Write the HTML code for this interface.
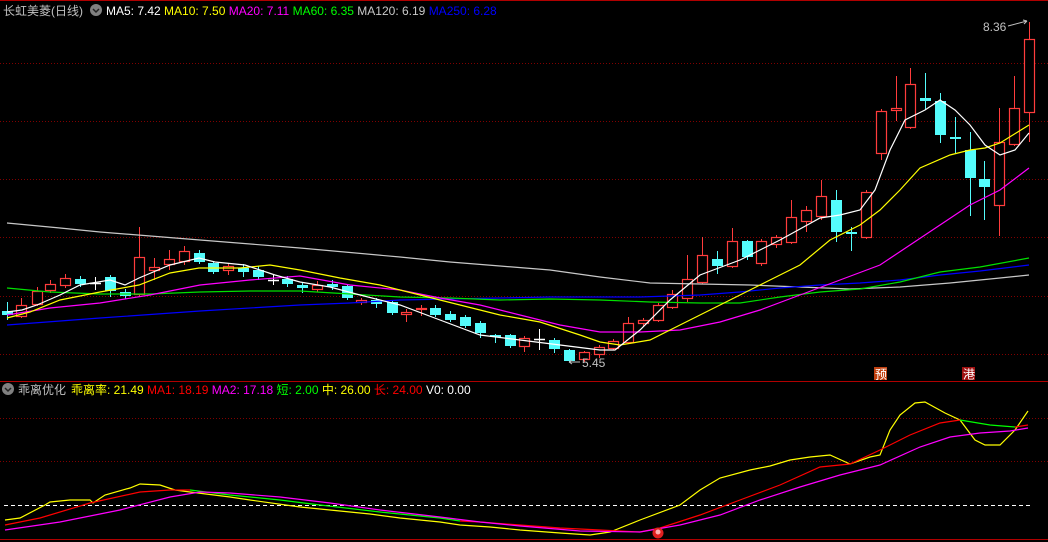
<!DOCTYPE html>
<html><head><meta charset="utf-8"><style>
html,body{margin:0;padding:0;background:#000;width:1048px;height:542px;overflow:hidden}
svg{display:block}
text{font-family:"Liberation Sans","Noto Sans CJK SC",sans-serif;font-size:12px}
</style></head><body>
<svg id="s" width="1048" height="542" viewBox="0 0 1048 542" xmlns="http://www.w3.org/2000/svg">
<rect width="1048" height="542" fill="#000"/>
<line x1="0" y1="0.5" x2="1048" y2="0.5" stroke="#b00000"/>
<g stroke="#800000" stroke-dasharray="1,2" stroke-width="1">
<line x1="0" y1="63.5" x2="1048" y2="63.5"/><line x1="0" y1="121.5" x2="1048" y2="121.5"/>
<line x1="0" y1="179.5" x2="1048" y2="179.5"/><line x1="0" y1="237.5" x2="1048" y2="237.5"/>
<line x1="0" y1="296.5" x2="1048" y2="296.5"/><line x1="0" y1="354.5" x2="1048" y2="354.5"/>
<line x1="0" y1="418.5" x2="1048" y2="418.5"/><line x1="0" y1="461.5" x2="1048" y2="461.5"/>
</g>
<line x1="0" y1="381.5" x2="1048" y2="381.5" stroke="#b00000"/>
<line x1="0" y1="539.5" x2="1048" y2="539.5" stroke="#b00000"/>
<line x1="4" y1="505.5" x2="1030" y2="505.5" stroke="#fff" stroke-dasharray="4,3"/>
<g id="c"></g>
<g fill="none" stroke-width="1.2">
<polyline stroke="#c8c8c8" points="7,223 60,228 100,232 200,240 300,248 400,257 450,262 500,266 550,270 600,277 650,283 700,284 750,285 800,287 850,289 900,287 950,283 1000,278 1029,275"/>
<polyline stroke="#0000ff" points="7,325 100,318 200,311 300,305 350,303 400,300 450,299 500,298 550,297 600,297 640,297 700,295 740,292 780,288 820,285 860,283 900,280 940,275 980,271 1029,265"/>
<polyline stroke="#00e000" points="7,288 50,292 100,294 150,294 200,292 250,291 300,291 350,294 400,297 450,298 500,300 550,299 600,300 650,302 700,303 740,303 780,297 820,292 860,289 900,282 940,272 980,267 1029,258"/>
<polyline stroke="#ff00ff" points="7,315 50,308 100,303 150,295 200,285 250,280 300,276 350,285 400,290 440,298 480,305 520,315 560,325 600,332 640,332 680,330 720,322 760,310 800,295 840,280 880,265 910,245 940,225 970,205 1000,190 1029,168"/>
<polyline stroke="#ffff00" points="7,318 30,312 60,300 100,292 139,285 170,273 199,268 240,268 270,265 300,270 340,278 380,285 420,295 460,305 500,315 540,322 580,335 600,342 620,345 650,340 680,325 720,305 760,285 800,265 830,240 860,225 880,210 900,190 920,168 950,155 970,150 985,148 1000,143 1029,125"/>
<polyline stroke="#ffffff" points="7,312 22,310 37,305 60,295 80,285 110,280 125,285 139,278 170,265 199,258 215,262 245,265 275,275 300,282 330,287 360,295 400,305 440,320 480,335 520,340 560,345 600,350 615,350 640,330 670,300 700,275 740,260 780,240 820,218 840,215 860,210 875,190 890,150 905,120 925,110 940,100 955,110 970,125 985,145 1000,155 1015,150 1029,133"/>
</g>
<g fill="none" stroke-width="1.2">
<polyline stroke="#ffff00" points="5,520 20,518 45,505 50,502 70,500 90,500 93,503 105,495 130,488 140,484 160,485 175,490 190,492 230,497 250,500 300,507 330,510 370,514 400,518 440,522 460,525 490,527 520,530 560,533 590,535 610,532 640,520 680,505 700,490 720,478 750,470 770,466 790,460 810,457 830,455 850,464 870,457 880,455 890,430 900,415 915,403 925,402 945,413 960,420 975,440 985,445 1000,445 1015,430 1028,411"/>
<polyline stroke="#00ff00" points="190,490 230,495 280,500 320,505 380,512 440,518 460,521"/>
<polyline stroke="#ff0000" points="5,525 40,518 90,503 140,492 170,490 190,490"/>
<polyline stroke="#ff0000" points="460,521 480,522 520,525 560,528 600,530 640,532 660,528 700,515 740,500 780,485 820,467 850,464 880,450 910,435 940,423 960,420"/>
<polyline stroke="#00ff00" points="960,420 990,425 1015,427"/>
<polyline stroke="#ff0000" points="1015,427 1028,425"/>
<polyline stroke="#ff00ff" points="5,530 60,522 120,510 170,497 200,492 230,493 280,497 330,503 380,510 440,517 480,522 520,526 580,531 640,532 680,525 720,515 760,500 800,487 840,475 880,465 920,447 950,437 980,433 1010,431 1028,428"/>
</g>
<circle cx="658" cy="533" r="5.5" fill="#e02020"/><circle cx="658" cy="532" r="2.5" fill="#ffb0b0"/>
<rect x="874" y="367" width="13" height="13" fill="#c04010"/><text x="875" y="378.5" fill="#fff" font-size="11">预</text>
<rect x="962" y="367" width="13" height="13" fill="#a01010"/><text x="963" y="378.5" fill="#fff" font-size="11">港</text>
<text x="582" y="367" fill="#c0c0c0">5.45</text>
<path d="M569 362 H580 M569 362 l3 -2 M569 362 l3 2" stroke="#c0c0c0" fill="none"/>
<text x="983" y="31" fill="#c0c0c0">8.36</text>
<path d="M1008 26 L1027 21 M1027 21 l-4 -1 M1027 21 l-3 3" stroke="#c0c0c0" fill="none"/>
<text x="3" y="15" fill="#c0c0c0" font-size="13">长虹美菱(日线)</text>
<circle cx="96" cy="10" r="6" fill="#808080"/><path d="M93 9 l3 3 l3 -3" stroke="#222" fill="none" stroke-width="1.5"/>
<text x="106" y="15"><tspan fill="#fff">MA5: 7.42 </tspan><tspan fill="#ffff00">MA10: 7.50 </tspan><tspan fill="#ff00ff">MA20: 7.11 </tspan><tspan fill="#00ff00">MA60: 6.35 </tspan><tspan fill="#c8c8c8">MA120: 6.19 </tspan><tspan fill="#0000ff">MA250: 6.28</tspan></text>
<circle cx="8" cy="389" r="6" fill="#808080"/><path d="M5 388 l3 3 l3 -3" stroke="#222" fill="none" stroke-width="1.5"/>
<text x="18" y="394" fill="#c0c0c0" font-size="13">乖离优化</text>
<text x="71" y="394"><tspan fill="#ffff00">乖离率: 21.49 </tspan><tspan fill="#ff0000">MA1: 18.19 </tspan><tspan fill="#ff00ff">MA2: 17.18 </tspan><tspan fill="#00ff00">短: 2.00 </tspan><tspan fill="#ffff00">中: 26.00 </tspan><tspan fill="#ff0000">长: 24.00 </tspan><tspan fill="#fff">V0: 0.00</tspan></text>
</svg>
<script>
var d=[
[7,311,315,302,320,0],[21,305,316,298,318,1],[37,291,304,287,306,1],[50,284,290,280,293,1],[65,278,285,274,288,1],[80,279,284,276,287,0],[95,283,283,277,290,2],
[110,277,291,275,297,0],[125,292,296,289,299,0],[139,257,294,227,297,1],[154,267,270,258,280,1],[169,259,264,250,270,1],[184,251,261,246,265,1],
[199,253,262,250,264,0],[213,263,272,261,274,0],[228,266,270,264,275,1],[243,268,272,264,277,0],[258,270,277,266,280,0],[273,280,280,274,285,2],
[287,279,284,276,287,0],[302,285,288,282,293,0],[317,285,289,281,292,1],[332,284,287,280,290,0],[347,286,298,284,300,0],[361,300,302,298,305,1],
[376,300,304,298,308,0],[392,302,313,300,315,0],[406,312,314,309,322,1],[421,308,308,305,316,1],[435,308,315,305,317,0],[450,314,320,311,322,0],
[465,317,326,315,328,0],[480,323,333,321,338,0],[495,335,337,334,343,0],[510,335,346,334,348,0],[524,338,346,336,352,1],[539,339,339,329,350,2],
[554,340,349,338,353,0],[569,350,361,349,362,0],[584,352,359,351,362,1],[599,347,354,345,358,1],[613,341,348,339,350,1],[628,323,342,317,344,1],
[643,320,323,318,327,1],[658,305,320,303,322,1],[672,294,307,290,309,1],[687,279,298,255,302,1],[702,255,282,237,284,1],[717,259,266,251,274,0],
[732,241,266,228,268,1],[747,241,257,240,260,0],[761,241,263,239,266,1],[776,237,244,235,248,1],[791,217,242,200,244,1],[806,210,221,206,232,1],
[821,196,216,180,220,1],[836,200,232,190,242,0],[851,232,234,227,251,0],[866,192,237,190,239,1],[881,111,153,109,160,1],[896,108,110,76,121,1],
[910,84,127,68,129,1],[925,98,101,73,110,0],[940,101,135,93,143,0],[955,137,137,117,153,0],[970,150,178,132,216,0],[984,179,187,161,220,0],
[999,142,205,108,236,1],[1014,108,144,76,146,1],[1029,39,112,22,142,1]];
var g=document.getElementById('c'),h='';
d.forEach(function(c){var x=c[0],col=c[5]==0?'#54fcfc':c[5]==1?'#ff3c3c':(c[0]==273||c[0]==95||c[0]==539?'#fff':'#54fcfc');
if(c[0]==955)col='#54fcfc';
h+='<line x1="'+(x+.5)+'" y1="'+c[3]+'" x2="'+(x+.5)+'" y2="'+c[4]+'" stroke="'+col+'"/>';
if(c[5]==0)h+='<rect x="'+(x-5)+'" y="'+c[1]+'" width="11" height="'+Math.max(2,c[2]-c[1])+'" fill="'+col+'"/>';
else if(c[5]==1)h+='<rect x="'+(x-4.5)+'" y="'+(c[1]+.5)+'" width="10" height="'+Math.max(1,c[2]-c[1])+'" fill="#000" stroke="'+col+'" stroke-width="1.2"/>';
else h+='<line x1="'+(x-5)+'" y1="'+(c[1]+.5)+'" x2="'+(x+6)+'" y2="'+(c[1]+.5)+'" stroke="'+col+'" stroke-width="1.5"/>';});
g.innerHTML=h;
</script>
</body></html>
